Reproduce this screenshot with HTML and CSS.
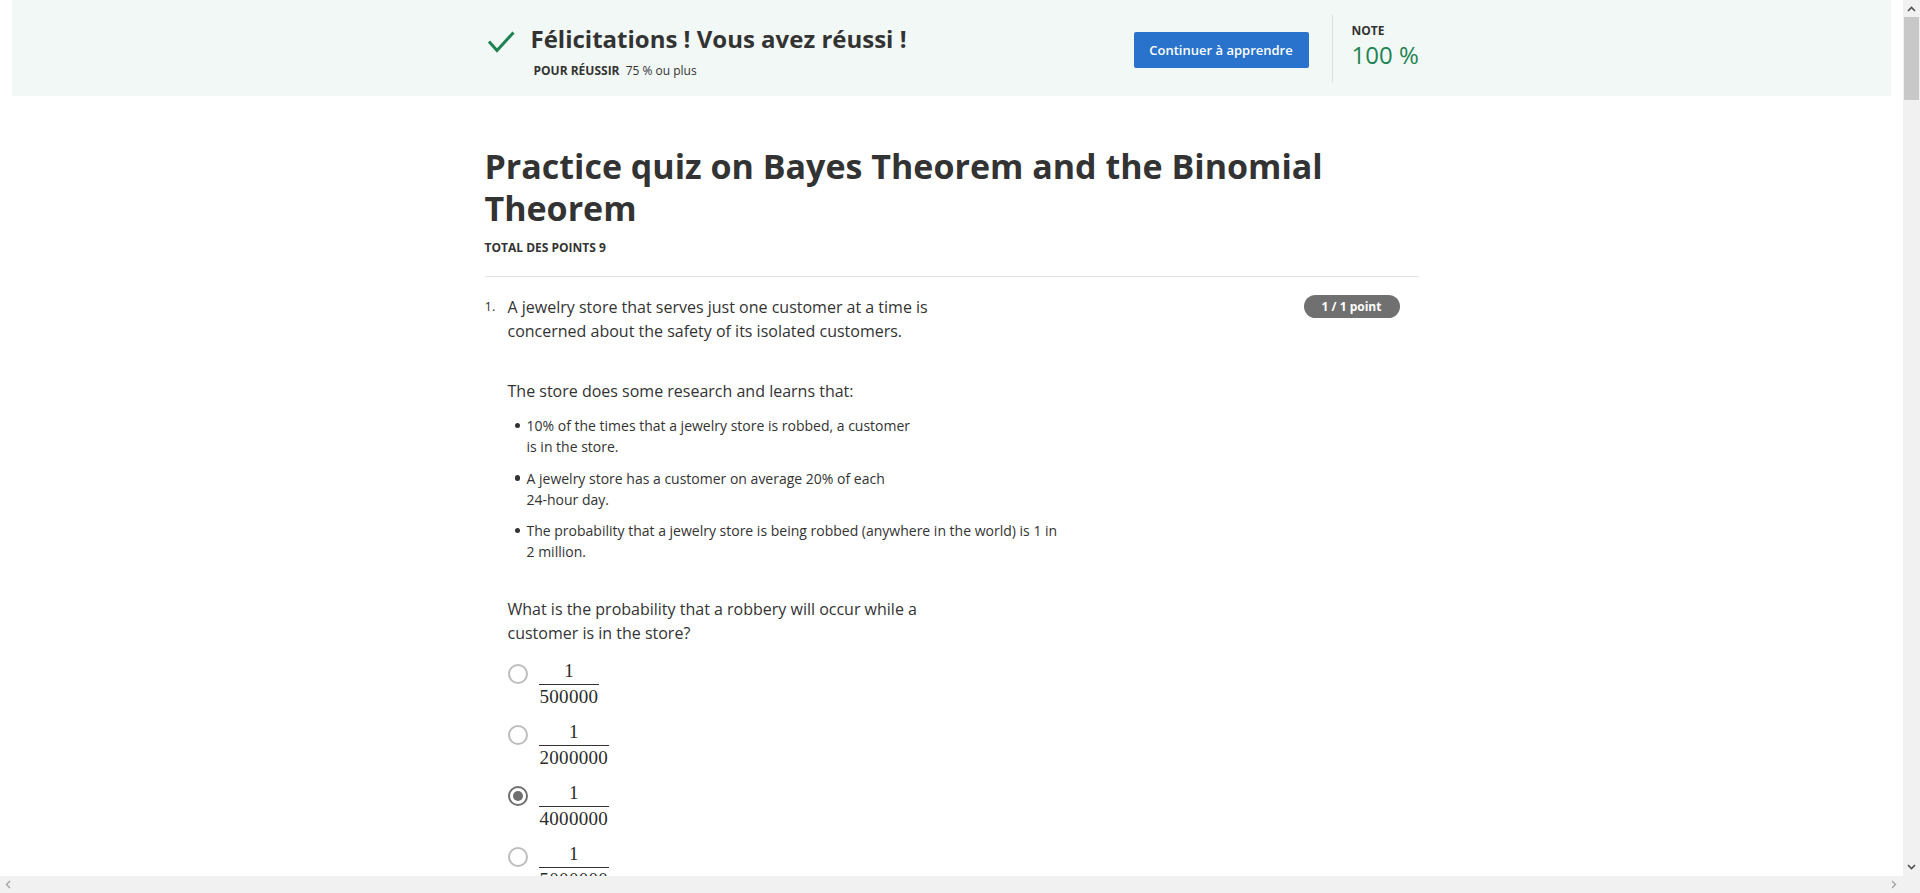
FILE: index.html
```html
<!DOCTYPE html>
<html lang="fr">
<head>
<meta charset="utf-8">
<title>Practice quiz on Bayes Theorem and the Binomial Theorem</title>
<link rel="stylesheet" href="styles.css">
</head>
<body>
<div class="page">
  <header class="banner">
    <div class="banner-inner">
      <div class="result">
        <svg class="check" width="28" height="22" viewBox="0 0 28 22" aria-hidden="true">
          <polyline points="2,10.5 10,19.5 26.5,1.5" fill="none" stroke="#1f8354" stroke-width="3"/>
        </svg>
        <div class="result-text">
          <h2 class="result-title">Félicitations ! Vous avez réussi !</h2>
          <div class="result-sub"><span class="label">POUR RÉUSSIR</span> 75 % ou plus</div>
        </div>
      </div>
      <button class="btn-primary" type="button">Continuer à apprendre</button>
      <div class="grade">
        <div class="label">NOTE</div>
        <div class="grade-value">100 %</div>
      </div>
    </div>
  </header>

  <main class="content">
    <h1 class="quiz-title">Practice quiz on Bayes Theorem and the Binomial Theorem</h1>
    <div class="total label">TOTAL DES POINTS 9</div>
    <hr class="rule">

    <section class="question">
      <div class="q-num">1.</div>
      <div class="q-body">
        <p class="q-text">A jewelry store that serves just one customer at a time is<br>concerned about the safety of its isolated customers.</p>
        <p class="q-para">The store does some research and learns that:</p>
        <ul class="facts">
          <li>10% of the times that a jewelry store is robbed, a customer<br>is in the store.</li>
          <li>A jewelry store has a customer on average 20% of each<br>24-hour day.</li>
          <li>The probability that a jewelry store is being robbed (anywhere in the world) is 1 in<br>2 million.</li>
        </ul>
        <p class="q-para">What is the probability that a robbery will occur while a<br>customer is in the store?</p>
        <div class="options">
          <label class="option"><span class="radio"></span><span class="frac"><span class="num">1</span><span class="den">500000</span></span></label>
          <label class="option"><span class="radio"></span><span class="frac"><span class="num">1</span><span class="den">2000000</span></span></label>
          <label class="option"><span class="radio checked"></span><span class="frac"><span class="num">1</span><span class="den">4000000</span></span></label>
          <label class="option"><span class="radio"></span><span class="frac"><span class="num">1</span><span class="den">5000000</span></span></label>
        </div>
      </div>
      <div class="badge">1 / 1 point</div>
    </section>
  </main>
</div>

<div class="vscroll">
  <svg class="arrow-up" width="9" height="6" viewBox="0 0 9 6"><polyline points="1,5 4.5,1.5 8,5" fill="none" stroke="#505050" stroke-width="1.6"/></svg>
  <div class="vthumb"></div>
  <svg class="arrow-down" width="9" height="6" viewBox="0 0 9 6"><polyline points="1,1 4.5,4.5 8,1" fill="none" stroke="#505050" stroke-width="1.6"/></svg>
</div>
<div class="hscroll">
  <svg class="arrow-left" width="6" height="9" viewBox="0 0 6 9"><polyline points="5,1 1.5,4.5 5,8" fill="none" stroke="#a3a3a3" stroke-width="1.4"/></svg>
  <svg class="arrow-right" width="6" height="9" viewBox="0 0 6 9"><polyline points="1,1 4.5,4.5 1,8" fill="none" stroke="#a3a3a3" stroke-width="1.4"/></svg>
</div>
</body>
</html>
```

FILE: styles.css
```css
html, body {
  margin: 0;
  padding: 0;
  overflow: hidden;
  background: #fff;
}
body {
  font-family: "Open Sans", "Liberation Sans", Arial, sans-serif;
  color: #333;
}
.page {
  width: 1903px;
  height: 893px;
  overflow: hidden;
}

/* Banner */
.banner {
  margin: 0 12px;
  height: 96px;
  background: #f2f8f6;
}
.banner-inner {
  width: 934px;
  height: 96px;
  margin: 0 auto;
  display: flex;
  align-items: center;
}
.result {
  display: flex;
  align-items: flex-start;
  flex: 1;
  padding-left: 2px;
  padding-top: 6px;
}
.check {
  display: block;
  margin-top: 8px;
  margin-right: 16px;
}
.result-title {
  margin: 0;
  font-size: 24px;
  line-height: 32px;
  font-weight: 700;
  color: #333;
}
.result-sub {
  margin-top: 7px;
  padding-left: 3px;
  font-size: 12px;
  line-height: 18px;
}
.label {
  font-weight: 700;
  font-size: 12px;
  text-transform: uppercase;
}
.result-sub .label { margin-right: 3px; }
.btn-primary {
  font-family: inherit;
  width: 175px;
  height: 36px;
  margin-top: 4px;
  border: 0;
  border-radius: 2px;
  background: #2a73cc;
  color: #fff;
  font-size: 13px;
  font-weight: 600;
}
.grade {
  margin-left: 23px;
  border-left: 1px solid #dadedd;
  height: 59px;
  padding: 8px 0 0 19px;
  width: 67px;
  white-space: nowrap;
}
.grade .label { line-height: 16px; }
.grade-value {
  font-size: 24px;
  line-height: 32px;
  color: #1f8354;
}

/* Content */
.content {
  width: 934px;
  margin: 0 auto;
}
.quiz-title {
  margin: 49px 0 0;
  font-size: 34px;
  line-height: 42px;
  font-weight: 700;
  color: #333;
}
.total {
  margin-top: 11px;
  line-height: 16px;
}
.rule {
  margin: 20px 0 0;
  border: 0;
  border-top: 1px solid #e1e1e1;
}
.question {
  margin-top: 18px;
  display: flex;
  align-items: flex-start;
}
.q-num {
  width: 23px;
  font-size: 13px;
  line-height: 22px;
}
.q-body {
  flex: 1;
}
.q-text, .q-para {
  margin: 0;
  font-size: 16px;
  line-height: 24px;
}
.q-text + .q-para { margin-top: 36px; }
.facts {
  list-style: none;
  margin: 12px 0 0;
  padding: 0 0 0 19px;
  font-size: 14px;
  line-height: 21px;
}
.facts li { margin-bottom: 10.5px; }
.facts li::before {
  content: "";
  display: inline-block;
  width: 5.5px;
  height: 5.5px;
  border-radius: 50%;
  background: #333;
  margin-left: -12px;
  margin-right: 6.5px;
  vertical-align: 3px;
}
.facts + .q-para { margin-top: 35px; }
.badge {
  margin-top: 0;
  margin-right: 19px;
  width: 96px;
  height: 23px;
  border-radius: 12px;
  background: #707070;
  color: #fff;
  font-size: 12px;
  font-weight: 700;
  line-height: 23px;
  text-align: center;
}
.options {
  margin-top: 15px;
}
.option {
  display: flex;
  align-items: flex-start;
  margin-bottom: 13px;
}
.radio {
  box-sizing: border-box;
  width: 20px;
  height: 20px;
  margin-top: 4px;
  margin-right: 11px;
  border: 2px solid #bdbdbd;
  border-radius: 50%;
  background: #fff;
  display: flex;
  align-items: center;
  justify-content: center;
}
.radio.checked { border-color: #6f6f6f; }
.radio.checked::after {
  content: "";
  width: 10px;
  height: 10px;
  border-radius: 50%;
  background: #6f6f6f;
}
.frac {
  display: inline-flex;
  flex-direction: column;
  align-items: stretch;
  font-family: "Liberation Serif", "DejaVu Serif", serif;
  font-size: 19px;
  color: #2b2b2b;
  text-align: center;
}
.num {
  line-height: 22px;
  padding-bottom: 2px;
  border-bottom: 1.3px solid #333;
}
.den {
  line-height: 22px;
  padding: 1px 1px 0;
  letter-spacing: 0.3px;
}

/* Fake browser scrollbars */
.vscroll {
  position: fixed;
  top: 0;
  right: 0;
  width: 17px;
  height: 893px;
  background: #f1f1f1;
}
.arrow-up {
  position: absolute;
  top: 6px;
  left: 4px;
}
.arrow-down {
  position: absolute;
  top: 864px;
  left: 4px;
}
.vthumb {
  position: absolute;
  top: 17px;
  left: 1px;
  width: 15px;
  height: 83px;
  background: #c8c8c8;
}
.hscroll {
  position: fixed;
  left: 0;
  bottom: 0;
  width: 1903px;
  height: 17px;
  background: #f1f1f1;
}
.arrow-left {
  position: absolute;
  left: 5px;
  top: 4px;
}
.arrow-right {
  position: absolute;
  right: 6px;
  top: 4px;
}
```
